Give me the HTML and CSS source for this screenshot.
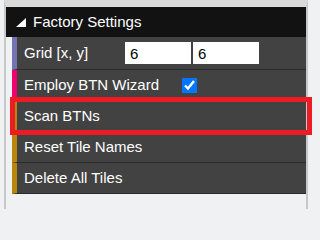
FILE: index.html
```html
<!DOCTYPE html>
<html>
<head>
<meta charset="utf-8">
<link rel="stylesheet" href="styles.css">
</head>
<body>
<div class="frame">
  <div class="header">
    <svg class="tri" width="10" height="9" viewBox="0 0 10 9"><polygon points="10,0 10,9 0,9" fill="#fff"/></svg>
    <span>Factory Settings</span>
  </div>
  <div class="row row-grid accent-purple">
    <span class="label grid-label">Grid [x, y]</span>
    <input class="num" type="text" value="6">
    <input class="num" type="text" value="6">
  </div>
  <div class="row accent-pink">
    <span class="label">Employ BTN Wizard</span>
    <input class="check" type="checkbox" checked>
  </div>
  <div class="row accent-gold">
    <span class="label">Scan BTNs</span>
  </div>
  <div class="row accent-gold">
    <span class="label">Reset Tile Names</span>
  </div>
  <div class="row accent-gold">
    <span class="label">Delete All Tiles</span>
  </div>
</div>
<div class="highlight"></div>
</body>
</html>
```

FILE: styles.css
```css
html, body {
  margin: 0;
  padding: 0;
  background: #f0f1f3;
  font-family: "Liberation Sans", Arial, sans-serif;
  font-size: 15px;
  color: #fff;
}
.frame {
  margin-left: 4px;
  width: 300px;
  min-height: 202px;
  border-left: 2px solid #c8c8c8;
  border-right: 2px solid #c8c8c8;
  border-top: 7px solid #dadada;
  background: #f0f1f3;
}
.header {
  height: 30px;
  background: #121212;
  display: flex;
  align-items: center;
  padding-left: 10px;
  line-height: 30px;
}
.tri {
  margin-right: 7px;
  margin-top: 1px;
}
.row {
  margin-left: 6px;
  height: 30px;
  background: #424242;
  border-bottom: 1px solid #2a2a2a;
  border-left: 5px solid #b8860b;
  display: flex;
  align-items: center;
  padding-left: 7px;
  line-height: 30px;
}
.row-grid {
  height: 32px;
}
.accent-purple { border-left-color: #7373b1; }
.accent-pink { border-left-color: #f0006c; }
.accent-gold { border-left-color: #b8860b; }
.grid-label {
  width: 101px;
}
.num {
  width: 66px;
  height: 22px;
  box-sizing: border-box;
  border: none;
  margin: 0 2px 0 0;
  padding: 0 5px;
  font-family: "Liberation Sans", Arial, sans-serif;
  font-size: 15px;
  color: #000;
  background: #fff;
}
.check {
  width: 15px;
  height: 15px;
  margin: 0 0 0 23px;
  accent-color: #0075ff;
}
.highlight {
  position: absolute;
  left: 10px;
  top: 97px;
  width: 302px;
  height: 38px;
  box-sizing: border-box;
  border: 5px solid #ed1c24;
}
```
